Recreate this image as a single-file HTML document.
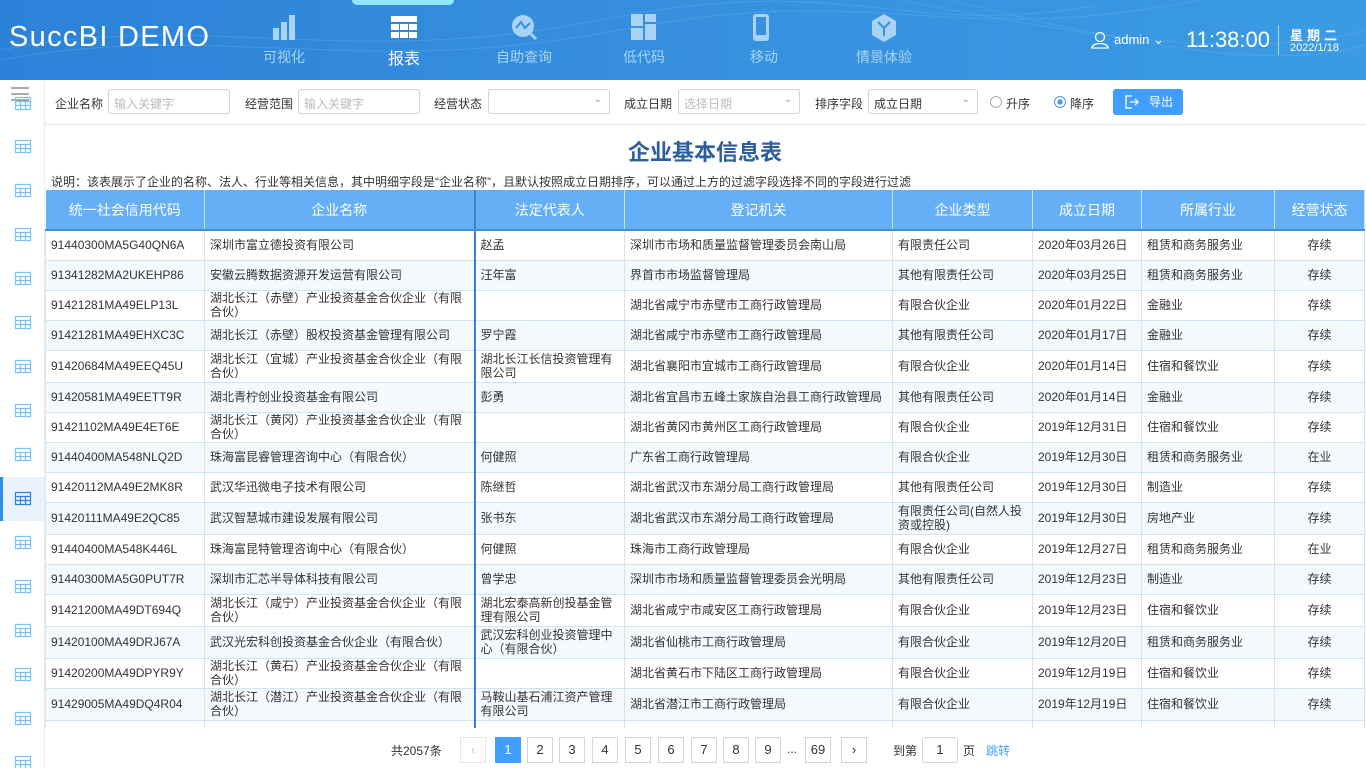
<!DOCTYPE html>
<html><head><meta charset="utf-8">
<style>
*{margin:0;padding:0;box-sizing:border-box}
body{width:1366px;height:768px;overflow:hidden;background:#fff;font-family:"Liberation Sans","Noto Sans CJK SC",sans-serif;color:#333;position:relative}
.hdr{position:absolute;left:0;top:0;width:1366px;height:80px;background:linear-gradient(90deg,#2b82d8 0%,#3690de 50%,#3a9be4 100%);overflow:hidden}
.logo{position:absolute;left:9px;top:21px;font-size:29px;color:#fff;letter-spacing:1.3px}
.nav{position:absolute;top:0;width:120px;height:80px;text-align:center;color:#a9d3f5;font-size:14px}
.nav .lb{position:absolute;top:47px;left:0;width:120px}
.nav svg{position:absolute;top:14px;left:47px}
.nav.act{color:#fff}
.nav.act .lb{font-size:16px;top:45px}
.glow{position:absolute;left:352px;top:0;width:102px;height:5px;background:#8fe8ff;border-radius:0 0 6px 6px}
.tb{position:absolute;left:44px;top:80px;width:1322px;height:45px;border-bottom:1px solid #e6e6e6}
.tb .l{position:absolute;top:15px;font-size:12px;color:#333}
.inp{position:absolute;top:9px;height:25px;border:1px solid #d3d3d3;border-radius:3px;font-size:12px;color:#bbb;padding:5px 5px;background:#fff}
.inp .ar{position:absolute;right:7px;top:4px;color:#999;font-size:10px}
.side{position:absolute;left:0;top:80px;width:44px;height:688px;background:#fff}
.title{position:absolute;left:44px;top:135px;width:1322px;text-align:center;font-size:22px;font-weight:bold;color:#2b5f9e}
.desc{position:absolute;left:51px;top:175px;font-size:12px;line-height:14px;color:#333}
th{background:#64aff5;color:#fff;font-weight:normal;font-size:14px;height:40px;border-right:1px solid #c9e2fa;border-bottom:2px solid #3f8fdc}
td{border:1px solid #cfe4f7;padding:0 5px;line-height:14px;overflow:hidden;vertical-align:middle}
tr.e td{background:#f4f9fe}
td.c8{text-align:center}
td.c2{border-right:2px solid #3b7fd0}
.wrap{position:absolute;left:45px;top:190px;width:1321px;height:538px;overflow:hidden}
table{border-collapse:collapse;table-layout:fixed;font-size:12px}
.pg{position:absolute;top:742px;font-size:12px}
.pb{position:absolute;top:737px;width:26px;height:26px;border:1px solid #d5d5d5;text-align:center;line-height:24px;font-size:13px;color:#333;background:#fff}
</style></head><body>
<div class="hdr">
<svg width="1366" height="80" style="position:absolute;left:0;top:0" fill="none" stroke="#6ab8ef" stroke-opacity=".35">
<path d="M0 50 C200 10 350 70 600 20 S 900 40 1100 5"/><path d="M0 60 C220 20 360 80 620 30 S 950 50 1200 0"/><path d="M900 0 C1100 40 1250 60 1366 30"/><path d="M950 0 C1150 50 1280 70 1366 45"/>
</svg>
<div class="glow"></div>
<div class="logo">SuccBI DEMO</div>
<div class="nav" style="left:224px"><svg width="26" height="28"><rect x="2" y="14" width="6" height="12" fill="#a9d3f5"/><rect x="10" y="8" width="6" height="18" fill="#a9d3f5"/><rect x="18" y="1" width="6" height="25" fill="#a9d3f5"/></svg><div class="lb">可视化</div></div>
<div class="nav act" style="left:344px"><svg width="26" height="26"><g fill="#fff"><rect x="0" y="2" width="26" height="6"/><rect x="0" y="10" width="8" height="6"/><rect x="9" y="10" width="8" height="6"/><rect x="18" y="10" width="8" height="6"/><rect x="0" y="18" width="8" height="6"/><rect x="9" y="18" width="8" height="6"/><rect x="18" y="18" width="8" height="6"/></g></svg><div class="lb">报表</div></div>
<div class="nav" style="left:464px"><svg width="28" height="28"><circle cx="12" cy="12" r="11" fill="#a9d3f5"/><path d="M5 14 L10 8 L14 14 L19 9" stroke="#3690de" stroke-width="2" fill="none"/><path d="M19 19 L25 25" stroke="#a9d3f5" stroke-width="3"/></svg><div class="lb">自助查询</div></div>
<div class="nav" style="left:584px"><svg width="26" height="28"><rect x="0" y="0" width="12" height="12" fill="#a9d3f5"/><rect x="14" y="0" width="11" height="8" fill="#a9d3f5"/><rect x="0" y="14" width="12" height="12" fill="#a9d3f5"/><rect x="14" y="10" width="11" height="16" fill="#a9d3f5"/></svg><div class="lb">低代码</div></div>
<div class="nav" style="left:704px"><svg width="20" height="28"><rect x="2" y="0" width="16" height="27" rx="3" fill="#a9d3f5"/><rect x="5" y="3" width="10" height="18" fill="#3690de"/></svg><div class="lb">移动</div></div>
<div class="nav" style="left:824px"><svg width="26" height="28"><path d="M13 0 L25 7 L25 21 L13 28 L1 21 L1 7 Z" fill="#a9d3f5"/><path d="M7 8 L13 14 L19 8 M13 14 L13 22" stroke="#3690de" stroke-width="2" fill="none"/></svg><div class="lb">情景体验</div></div>
<svg width="18" height="18" style="position:absolute;left:1091px;top:31px" fill="none" stroke="#fff" stroke-width="1.3"><circle cx="9" cy="6" r="4.5"/><path d="M1 17 C1 11 17 11 17 17 Z"/></svg>
<div style="position:absolute;left:1114px;top:32px;font-size:13px;color:#fff">admin ⌄</div>
<div style="position:absolute;left:1186px;top:27px;font-size:22px;color:#fff">11:38:00</div>
<div style="position:absolute;left:1278px;top:25px;width:1px;height:30px;background:#a8d2f3"></div>
<div style="position:absolute;left:1290px;top:25px;font-size:13px;color:#fff;font-weight:bold;letter-spacing:4px">星期二</div>
<div style="position:absolute;left:1290px;top:42px;font-size:11px;color:#fff">2022/1/18</div>
</div>
<div class="side">
<svg width="18" height="14" style="position:absolute;left:11px;top:7px" stroke="#555" stroke-width="1"><path d="M0 1H18M0 7H18M0 13H18"/></svg>
<div style="position:absolute;left:0;top:397px;width:44px;height:44px;background:#e8f3fe;border-left:3px solid #2f8de6"></div>
</div>
<svg width="44" height="688" style="position:absolute;left:0;top:80px" fill="none" stroke="#7cc1f3" stroke-width="1.2">
<g id="g"><rect x="15.5" y="17.5" width="15" height="12"/><path d="M15.5 21.5H30.5M15.5 25.5H30.5M20.5 21.5V29.5M25.5 21.5V29.5"/></g>
<use href="#g" y="43"/><use href="#g" y="87"/><use href="#g" y="131"/><use href="#g" y="175"/><use href="#g" y="219"/><use href="#g" y="263"/><use href="#g" y="307"/><use href="#g" y="351"/><use href="#g" y="395" stroke="#2f7fe0"/><use href="#g" y="439"/><use href="#g" y="483"/><use href="#g" y="527"/><use href="#g" y="571"/><use href="#g" y="615"/><use href="#g" y="659"/>
</svg>
<div style="position:absolute;left:44px;top:80px;width:1px;height:688px;background:#eee"></div>
<div class="tb">
<span class="l" style="left:11px">企业名称</span><div class="inp" style="left:64px;width:122px">输入关键字</div>
<span class="l" style="left:201px">经营范围</span><div class="inp" style="left:254px;width:122px">输入关键字</div>
<span class="l" style="left:390px">经营状态</span><div class="inp" style="left:444px;width:122px"><span class="ar">⌄</span></div>
<span class="l" style="left:580px">成立日期</span><div class="inp" style="left:634px;width:122px">选择日期<span class="ar">⌄</span></div>
<span class="l" style="left:771px">排序字段</span><div class="inp" style="left:824px;width:110px;color:#333">成立日期<span class="ar">⌄</span></div>
<span style="position:absolute;left:946px;top:16px;width:12px;height:12px;border:1px solid #aaa;border-radius:50%"></span><span class="l" style="left:962px">升序</span>
<span style="position:absolute;left:1010px;top:16px;width:12px;height:12px;border:1px solid #4a9bf0;border-radius:50%;background:radial-gradient(#4a9bf0 35%,#fff 40%)"></span><span class="l" style="left:1026px">降序</span>
<div style="position:absolute;left:1069px;top:9px;width:70px;height:26px;background:#409eff;border-radius:3px;color:#fff;font-size:12px;line-height:26px;padding-left:36px">导出
<svg width="14" height="14" style="position:absolute;left:12px;top:6px" fill="none" stroke="#fff" stroke-width="1.3"><path d="M7 1H1V13H7M5 7H13M10 4L13 7L10 10"/></svg></div>
</div>
<div class="title">企业基本信息表</div>
<div class="desc">说明：该表展示了企业的名称、法人、行业等相关信息，其中明细字段是“企业名称”，且默认按照成立日期排序，可以通过上方的过滤字段选择不同的字段进行过滤</div>
<div class="wrap"><table>
<colgroup><col style="width:159px"><col style="width:270px"><col style="width:150px"><col style="width:268px"><col style="width:140px"><col style="width:109px"><col style="width:133px"><col style="width:90px"></colgroup>
<tr><th>统一社会信用代码</th><th style="border-right:2px solid #3b7fd0">企业名称</th><th>法定代表人</th><th>登记机关</th><th>企业类型</th><th>成立日期</th><th>所属行业</th><th>经营状态</th></tr>
<tr style="height:30px"><td>91440300MA5G40QN6A</td><td class="c2">深圳市富立德投资有限公司</td><td>赵孟</td><td>深圳市市场和质量监督管理委员会南山局</td><td>有限责任公司</td><td>2020年03月26日</td><td>租赁和商务服务业</td><td class="c8">存续</td></tr>
<tr class="e" style="height:30px"><td>91341282MA2UKEHP86</td><td class="c2">安徽云腾数据资源开发运营有限公司</td><td>汪年富</td><td>界首市市场监督管理局</td><td>其他有限责任公司</td><td>2020年03月25日</td><td>租赁和商务服务业</td><td class="c8">存续</td></tr>
<tr style="height:30px"><td>91421281MA49ELP13L</td><td class="c2">湖北长江（赤壁）产业投资基金合伙企业（有限合伙）</td><td></td><td>湖北省咸宁市赤壁市工商行政管理局</td><td>有限合伙企业</td><td>2020年01月22日</td><td>金融业</td><td class="c8">存续</td></tr>
<tr class="e" style="height:30px"><td>91421281MA49EHXC3C</td><td class="c2">湖北长江（赤壁）股权投资基金管理有限公司</td><td>罗宁霞</td><td>湖北省咸宁市赤壁市工商行政管理局</td><td>其他有限责任公司</td><td>2020年01月17日</td><td>金融业</td><td class="c8">存续</td></tr>
<tr style="height:32px"><td>91420684MA49EEQ45U</td><td class="c2">湖北长江（宜城）产业投资基金合伙企业（有限合伙）</td><td>湖北长江长信投资管理有限公司</td><td>湖北省襄阳市宜城市工商行政管理局</td><td>有限合伙企业</td><td>2020年01月14日</td><td>住宿和餐饮业</td><td class="c8">存续</td></tr>
<tr class="e" style="height:30px"><td>91420581MA49EETT9R</td><td class="c2">湖北青柠创业投资基金有限公司</td><td>彭勇</td><td>湖北省宜昌市五峰土家族自治县工商行政管理局</td><td>其他有限责任公司</td><td>2020年01月14日</td><td>金融业</td><td class="c8">存续</td></tr>
<tr style="height:30px"><td>91421102MA49E4ET6E</td><td class="c2">湖北长江（黄冈）产业投资基金合伙企业（有限合伙）</td><td></td><td>湖北省黄冈市黄州区工商行政管理局</td><td>有限合伙企业</td><td>2019年12月31日</td><td>住宿和餐饮业</td><td class="c8">存续</td></tr>
<tr class="e" style="height:30px"><td>91440400MA548NLQ2D</td><td class="c2">珠海富昆睿管理咨询中心（有限合伙）</td><td>何健照</td><td>广东省工商行政管理局</td><td>有限合伙企业</td><td>2019年12月30日</td><td>租赁和商务服务业</td><td class="c8">在业</td></tr>
<tr style="height:30px"><td>91420112MA49E2MK8R</td><td class="c2">武汉华迅微电子技术有限公司</td><td>陈继哲</td><td>湖北省武汉市东湖分局工商行政管理局</td><td>其他有限责任公司</td><td>2019年12月30日</td><td>制造业</td><td class="c8">存续</td></tr>
<tr class="e" style="height:32px"><td>91420111MA49E2QC85</td><td class="c2">武汉智慧城市建设发展有限公司</td><td>张书东</td><td>湖北省武汉市东湖分局工商行政管理局</td><td>有限责任公司(自然人投资或控股)</td><td>2019年12月30日</td><td>房地产业</td><td class="c8">存续</td></tr>
<tr style="height:30px"><td>91440400MA548K446L</td><td class="c2">珠海富昆特管理咨询中心（有限合伙）</td><td>何健照</td><td>珠海市工商行政管理局</td><td>有限合伙企业</td><td>2019年12月27日</td><td>租赁和商务服务业</td><td class="c8">在业</td></tr>
<tr class="e" style="height:30px"><td>91440300MA5G0PUT7R</td><td class="c2">深圳市汇芯半导体科技有限公司</td><td>曾学忠</td><td>深圳市市场和质量监督管理委员会光明局</td><td>其他有限责任公司</td><td>2019年12月23日</td><td>制造业</td><td class="c8">存续</td></tr>
<tr style="height:32px"><td>91421200MA49DT694Q</td><td class="c2">湖北长江（咸宁）产业投资基金合伙企业（有限合伙）</td><td>湖北宏泰高新创投基金管理有限公司</td><td>湖北省咸宁市咸安区工商行政管理局</td><td>有限合伙企业</td><td>2019年12月23日</td><td>住宿和餐饮业</td><td class="c8">存续</td></tr>
<tr class="e" style="height:32px"><td>91420100MA49DRJ67A</td><td class="c2">武汉光宏科创投资基金合伙企业（有限合伙）</td><td>武汉宏科创业投资管理中心（有限合伙）</td><td>湖北省仙桃市工商行政管理局</td><td>有限合伙企业</td><td>2019年12月20日</td><td>租赁和商务服务业</td><td class="c8">存续</td></tr>
<tr style="height:30px"><td>91420200MA49DPYR9Y</td><td class="c2">湖北长江（黄石）产业投资基金合伙企业（有限合伙）</td><td></td><td>湖北省黄石市下陆区工商行政管理局</td><td>有限合伙企业</td><td>2019年12月19日</td><td>住宿和餐饮业</td><td class="c8">存续</td></tr>
<tr class="e" style="height:32px"><td>91429005MA49DQ4R04</td><td class="c2">湖北长江（潜江）产业投资基金合伙企业（有限合伙）</td><td>马鞍山基石浦江资产管理有限公司</td><td>湖北省潜江市工商行政管理局</td><td>有限合伙企业</td><td>2019年12月19日</td><td>住宿和餐饮业</td><td class="c8">存续</td></tr>
<tr style="height:30px"><td></td><td class="c2"></td><td></td><td></td><td></td><td></td><td></td><td></td></tr>
</table></div>
<span class="pg" style="left:391px">共2057条</span>
<div class="pb" style="left:460px;color:#ccc;border-color:#e5e5e5">‹</div>
<div class="pb" style="left:495px;background:#409eff;border-color:#409eff;color:#fff">1</div>
<div class="pb" style="left:527px">2</div><div class="pb" style="left:559px">3</div><div class="pb" style="left:592px">4</div><div class="pb" style="left:625px">5</div><div class="pb" style="left:658px">6</div><div class="pb" style="left:691px">7</div><div class="pb" style="left:723px">8</div><div class="pb" style="left:755px">9</div>
<span class="pg" style="left:787px">...</span>
<div class="pb" style="left:805px;width:26px">69</div>
<div class="pb" style="left:841px">›</div>
<span class="pg" style="left:893px">到第</span>
<div class="pb" style="left:922px;width:36px;border-radius:3px">1</div>
<span class="pg" style="left:963px">页</span>
<span class="pg" style="left:986px;color:#409eff">跳转</span>
</body></html>
